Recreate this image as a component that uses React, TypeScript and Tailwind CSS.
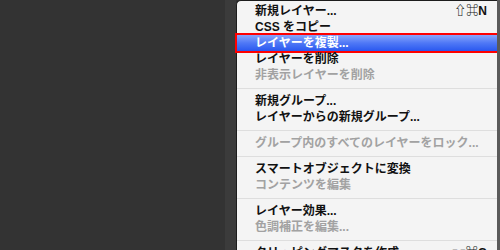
import React from 'react';

type Item = { label: string; shortcut?: string; disabled?: boolean; active?: boolean } | 'sep';

const items: Item[] = [
  { label: '新規レイヤー...', shortcut: '⇧⌘N' },
  { label: 'CSS をコピー' },
  { label: 'レイヤーを複製...', active: true },
  { label: 'レイヤーを削除' },
  { label: '非表示レイヤーを削除', disabled: true },
  'sep',
  { label: '新規グループ...' },
  { label: 'レイヤーからの新規グループ...' },
  'sep',
  { label: 'グループ内のすべてのレイヤーをロック...', disabled: true },
  'sep',
  { label: 'スマートオブジェクトに変換' },
  { label: 'コンテンツを編集', disabled: true },
  'sep',
  { label: 'レイヤー効果...' },
  { label: '色調補正を編集...', disabled: true },
  'sep',
  { label: 'クリッピングマスクを作成', shortcut: '⌥⌘G' },
];

const font = "font-['Liberation_Sans','Noto_Sans_CJK_JP',sans-serif]";

export default function App() {
  return (
    <div className={`flex h-[250px] w-[500px] overflow-hidden bg-[#333333] ${font}`}>
      <div className="w-[225px] shrink-0 bg-[#333333]" />
      <div className="w-[11px] shrink-0 bg-[#3b3b3b]" />

      {/* パネルメニュー */}
      <div className="flex flex-1 flex-col rounded-tl-[5px] border-l border-t border-[#1c1c1c] bg-[#f4f4f4] pt-[2px]">
        {items.map((item, i) =>
          item === 'sep' ? (
            <div key={i} className="flex h-[10px] shrink-0 items-center">
              <div className="h-px w-full bg-[#dedede]" />
            </div>
          ) : (
            <div
              key={i}
              className={
                item.active
                  ? 'flex h-4 shrink-0 items-center justify-between bg-gradient-to-b from-[#8aa4fa] via-[#4f78f6] to-[#2a57ef] pl-[18px] pr-[10px] text-white outline-2 outline-[#ff0000]'
                  : `flex h-4 shrink-0 items-center justify-between pl-[18px] pr-[10px] ${item.disabled ? 'text-[#a2a2a2]' : 'text-[#111111]'}`
              }
            >
              <span className="text-[12px] leading-none font-bold whitespace-nowrap">{item.label}</span>
              {item.shortcut && (
                <span className="text-[12px] leading-none font-bold whitespace-nowrap">{item.shortcut}</span>
              )}
            </div>
          )
        )}
      </div>

      <div className="w-[3px] shrink-0 bg-[#5a5a5a]" />
    </div>
  );
}
